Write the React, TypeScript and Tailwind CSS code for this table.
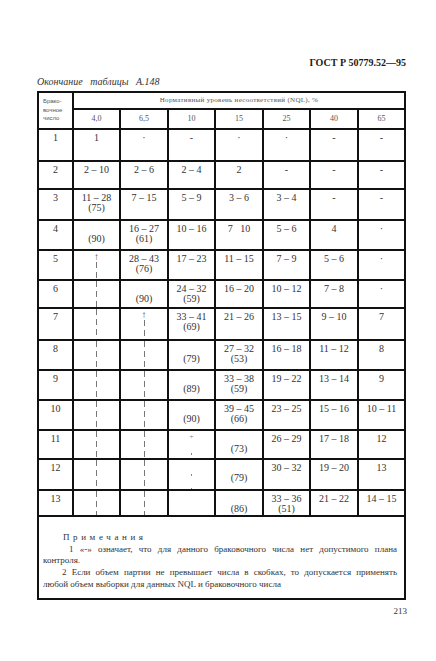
type Cell =
  | { a?: string; b?: string }
  | 'dash'
  | 'arrow'
  | 'dots'
  | 'dotsArrow'
  | 'empty';

const cols = ['4,0', '6,5', '10', '15', '25', '40', '65'];

const rows: Cell[][] = [
  [{ a: '1' }, { a: '·' }, { a: '-' }, { a: '·' }, { a: '·' }, { a: '-' }, { a: '-' }],
  [{ a: '2 – 10' }, { a: '2 – 6' }, { a: '2 – 4' }, { a: '2' }, { a: '-' }, { a: '-' }, { a: '-' }],
  [{ a: '11 – 28', b: '(75)' }, { a: '7 – 15' }, { a: '5 – 9' }, { a: '3 – 6' }, { a: '3 – 4' }, { a: '-' }, { a: '-' }],
  [{ b: '(90)' }, { a: '16 – 27', b: '(61)' }, { a: '10 – 16' }, { a: '7   10' }, { a: '5 – 6' }, { a: '4' }, { a: '·' }],
  ['arrow', { a: '28 – 43', b: '(76)' }, { a: '17 – 23' }, { a: '11 – 15' }, { a: '7 – 9' }, { a: '5 – 6' }, { a: '·' }],
  ['dash', { b: '(90)' }, { a: '24 – 32', b: '(59)' }, { a: '16 – 20' }, { a: '10 – 12' }, { a: '7 – 8' }, { a: '·' }],
  ['dash', 'arrow', { a: '33 – 41', b: '(69)' }, { a: '21 – 26' }, { a: '13 – 15' }, { a: '9 – 10' }, { a: '7' }],
  ['dash', 'dash', { b: '(79)' }, { a: '27 – 32', b: '(53)' }, { a: '16 – 18' }, { a: '11 – 12' }, { a: '8' }],
  ['dash', 'dash', { b: '(89)' }, { a: '33 – 38', b: '(59)' }, { a: '19 – 22' }, { a: '13 – 14' }, { a: '9' }],
  ['dash', 'dash', { b: '(90)' }, { a: '39 – 45', b: '(66)' }, { a: '23 – 25' }, { a: '15 – 16' }, { a: '10 – 11' }],
  ['dash', 'dash', 'dotsArrow', { b: '(73)' }, { a: '26 – 29' }, { a: '17 – 18' }, { a: '12' }],
  ['dash', 'dash', 'dots', { b: '(79)' }, { a: '30 – 32' }, { a: '19 – 20' }, { a: '13' }],
  ['dash', 'dash', 'empty', { b: '(86)' }, { a: '33 – 36', b: '(51)' }, { a: '21 – 22' }, { a: '14 – 15' }],
];

const dashLine =
  'w-px flex-1 bg-[repeating-linear-gradient(to_bottom,#777_0_6px,transparent_6px_10px)]';
const dotLine =
  'w-px flex-1 bg-[repeating-linear-gradient(to_bottom,transparent_0_12px,#888_12px_14px)]';

function TableCell({ cell }: { cell: Cell }) {
  if (cell === 'empty') return <div className="bg-white" />;
  if (cell === 'dash')
    return (
      <div className="bg-white flex flex-col items-center">
        <div className={dashLine} />
      </div>
    );
  if (cell === 'arrow')
    return (
      <div className="bg-white flex flex-col items-center pt-[1px]">
        <span className="text-[10px] leading-[10px] text-[#444]">↑</span>
        <div className={dashLine} />
      </div>
    );
  if (cell === 'dotsArrow' || cell === 'dots')
    return (
      <div className="bg-white flex flex-col items-center pt-[2px]">
        {cell === 'dotsArrow' && <span className="text-[7px] leading-[8px] text-[#777]">+</span>}
        <div className={dotLine} />
      </div>
    );
  return (
    <div className="bg-white pt-[3px] text-center text-[10px] leading-[10px] text-[#333] whitespace-pre">
      <div>{cell.a ?? '\u00a0'}</div>
      {cell.b && <div>{cell.b}</div>}
    </div>
  );
}

export default function App() {
  return (
    <div
      className="w-[436px] h-[661px] bg-white text-[#2a2a2a] overflow-hidden"
      style={{ fontFamily: '"Liberation Serif", "Times New Roman", serif' }}
    >
      <div className="flex justify-end pr-[30px] pt-[57px]">
        <span className="text-[10px] leading-[12px] font-bold text-[#1a1a1a]">ГОСТ Р 50779.52—95</span>
      </div>

      <div className="pl-[37px] mt-[7px] text-[10px] leading-[12px] italic [word-spacing:5px] text-[#333]">
        Окончание таблицы А.148
      </div>

      <div className="ml-[37px] mt-[3px] w-[369px] grid bg-[#111] gap-[2px] p-[2px] grid-cols-[33px_45px_46px_45px_46px_45px_46px_45px] grid-rows-[15px_18px_30px_26px_29px_28px_28px_26px_30px_28px_28px_28px_27px_29px_24px_81px]">
        <div
          className="row-span-2 bg-white pl-[4px] pt-[4px] text-[6px] leading-[8.5px] text-[#555]"
          style={{ fontFamily: '"Liberation Sans", Arial, sans-serif' }}
        >
          <div>Брако-</div>
          <div>вочное</div>
          <div>число</div>
        </div>
        <div className="col-span-7 bg-white flex items-center justify-center text-[7px] tracking-[0.3px] text-[#555]">
          Нормативный уровень несоответствий (NQL), %
        </div>
        {cols.map((c) => (
          <div key={c} className="bg-white flex items-center justify-center text-[8px] text-[#555]">
            {c}
          </div>
        ))}

        {rows.map((row, i) => (
          <div key={i} className="contents">
            <div className="bg-white pt-[3px] text-center text-[10px] leading-[10px] text-[#333]">{i + 1}</div>
            {row.map((cell, j) => (
              <TableCell key={j} cell={cell} />
            ))}
          </div>
        ))}

        <div className="col-span-8 bg-white pl-[4px] pr-[7px] pt-[15px] text-[9px] leading-[11.7px] text-[#333]">
          <div className="pl-[20px] tracking-[3.6px]">Примечания</div>
          <div className="pl-[26px] text-justify [text-align-last:justify]">
            1 «-» означает, что для данного браковочного числа нет допустимого плана
          </div>
          <div>контроля.</div>
          <div className="pl-[19px] text-justify [text-align-last:justify]">
            2 Если объем партии не превышает числа в скобках, то допускается применять
          </div>
          <div>любой объем выборки для данных NQL и браковочного числа</div>
        </div>
      </div>

      <div className="flex justify-end pr-[29px] mt-[5px] text-[9px] leading-[12px] text-[#333]">213</div>
    </div>
  );
}
